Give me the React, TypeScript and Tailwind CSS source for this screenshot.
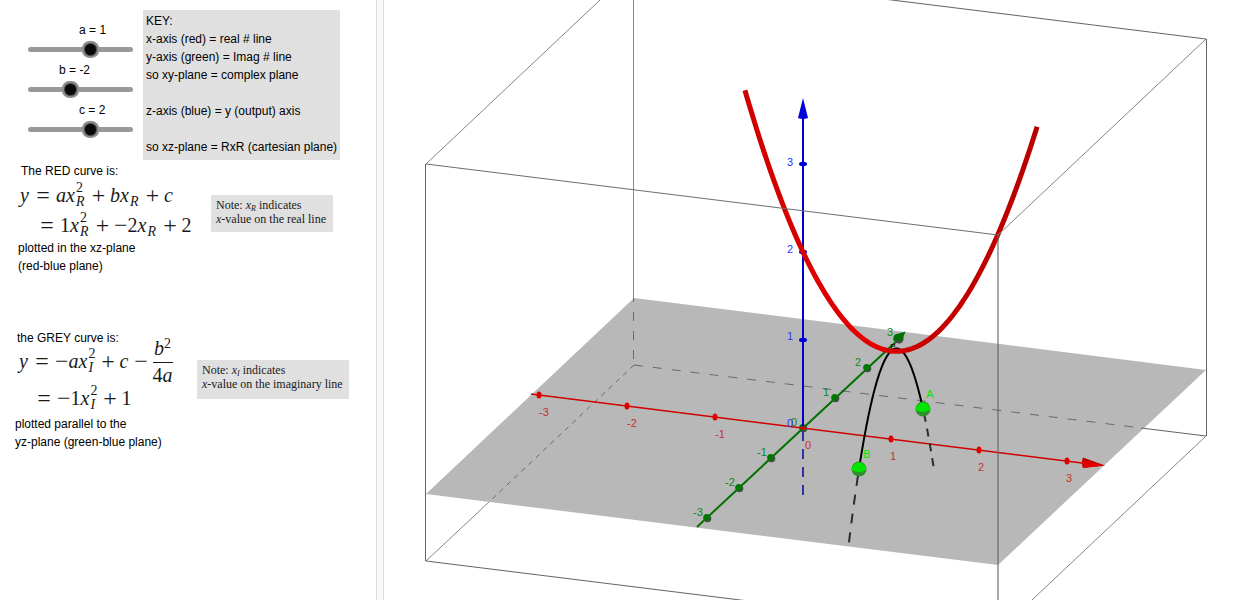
import { useState } from 'react';
import type { ReactNode } from 'react';

type Point = [number, number];

// Orthographic projection of the 3D view: origin and unit vectors in view units.
function project(x: number, y: number, z: number): Point {
  return [803 + 88 * x + 32 * y, 428 + 11 * x - 30 * y - 88 * z];
}

function toPath(from: number, to: number, at: (t: number) => Point) {
  const steps = 80;
  const points: string[] = [];
  for (let i = 0; i <= steps; i++) {
    const [px, py] = at(from + ((to - from) * i) / steps);
    points.push(`${px.toFixed(2)} ${py.toFixed(2)}`);
  }
  return `M${points.join('L')}`;
}

type SliderProps = {
  name: string;
  value: number;
  limit: number;
  onChange: (value: number) => void;
};

function Slider({ name, value, limit, onChange }: SliderProps) {
  const travel = ((value + limit) / (2 * limit)) * 100;
  return (
    <div className="flex h-10 flex-col">
      <label htmlFor={`slider-${name}`} className="h-5 leading-5 whitespace-nowrap" style={{ paddingLeft: travel + 19 }}>
        {name} = {value}
      </label>
      <input
        id={`slider-${name}`}
        type="range"
        min={-limit}
        max={limit}
        value={value}
        onChange={(e) => onChange(Number(e.target.value))}
        className="ml-7 h-[18px] w-[105px] cursor-pointer appearance-none bg-transparent [&::-webkit-slider-runnable-track]:h-[5px] [&::-webkit-slider-runnable-track]:rounded-full [&::-webkit-slider-runnable-track]:bg-[#999999] [&::-webkit-slider-thumb]:size-[5px] [&::-webkit-slider-thumb]:appearance-none [&::-webkit-slider-thumb]:rounded-full [&::-webkit-slider-thumb]:bg-[#0a0a0a] [&::-webkit-slider-thumb]:shadow-[0_0_0_3px_#0a0a0a,0_0_0_4px_#4a4a4a,0_0_0_6px_#8f8f8f]"
      />
    </div>
  );
}

function Equation({ children, className }: { children: ReactNode; className: string }) {
  return (
    <div className={`flex items-center font-['Liberation_Serif',serif] text-[20px] leading-6 text-[#1a1a1a] ${className}`}>
      {children}
    </div>
  );
}

function Equals() {
  return <span className="w-[26px] text-center text-[24px]">=</span>;
}

function Operator({ children }: { children: string }) {
  return <span className="w-[23px] text-center text-[24px]">{children}</span>;
}

function Minus() {
  return <span className="text-[24px]">−</span>;
}

function Var({ children }: { children: string }) {
  return <i className="min-w-[10px]">{children}</i>;
}

function Scripts({ sup, sub }: { sup?: string; sub: string }) {
  return (
    <span
      className={`flex h-7 flex-col justify-between text-[14px] leading-[14px] ${sub === 'R' ? 'w-[11px]' : 'w-2'}`}
    >
      <span>{sup}</span>
      <i>{sub}</i>
    </span>
  );
}

function Note({ sub, line, className }: { sub: string; line: string; className: string }) {
  return (
    <aside
      className={`bg-[#e0e0e0] px-[5px] pt-[3px] font-['Liberation_Serif',serif] text-[12px] leading-[14px] whitespace-nowrap text-[#1a1a1a] ${className}`}
    >
      <p>
        Note: <i>x</i>
        <sub className="text-[8px]">
          <i>{sub}</i>
        </sub>{' '}
        indicates
      </p>
      <p>
        <i>x</i>-value on the {line} line
      </p>
    </aside>
  );
}

type Coefficients = { a: number; b: number; c: number };

function Graph({ a, b, c }: Coefficients) {
  const vertex = -b / (2 * a);
  const bottom = c - (b * b) / (4 * a);
  const root = Math.sqrt(Math.abs(bottom / a));
  const real = (x: number) => project(x, 0, a * x * x + b * x + c);
  const imaginary = (t: number) => project(vertex, t, bottom - a * t * t);
  const pointA = imaginary(root);
  const pointB = imaginary(-root);
  const ticks = [-3, -2, -1, 0, 1, 2, 3];

  return (
    <svg
      viewBox="384 0 866 600"
      className="block h-auto w-full font-['Liberation_Sans',sans-serif] text-[11px]"
      role="img"
      aria-label="3D graph of the real and imaginary parabolas"
    >
      <defs>
        <linearGradient id="tube" x1="0" x2="1">
          <stop offset="0" stopColor="#d00000" />
          <stop offset="0.45" stopColor="#e60000" />
          <stop offset="0.6" stopColor="#c80000" />
          <stop offset="1" stopColor="#b80000" />
        </linearGradient>
      </defs>

      <path d="M426 494 634 298 1206 370 998 565Z" fill="#b8b8b8" />

      {/* hidden edges of the box */}
      <g fill="none" stroke="#6a6a6a">
        <path d="M633.5 298V365" strokeDasharray="9 10" strokeDashoffset="5" />
        <path d="M634 365 1141 428" strokeDasharray="9 10" />
        <path d="M634 365 489 502" strokeDasharray="5 5" />
      </g>

      {/* visible edges */}
      <g fill="none" stroke="#636363">
        <path d="M425.5 164V561" />
        <path d="M426 561 998 632" />
        <path d="M426 561 489 502" stroke="#858585" />
        <path d="M426 164 634 -32" stroke="#858585" />
        <path d="M634 -32 1206 39" />
        <path d="M1206.5 39V436" />
        <path d="M1141 428 1206 436" />
        <path d="M1206 436 998 632" stroke="#858585" />
        <path d="M633.5 0V298" stroke="#8a8a8a" />
      </g>

      {/* green axis */}
      <path d="M697 527 900 338" stroke="#007000" strokeWidth="2" />
      {ticks.map((n) => {
        const [x, y] = project(0, n, 0);
        return (
          <g key={n}>
            <circle cx={x + 0.5} cy={y + 0.5} r="3.8" fill="#4a4a4a" />
            <circle cx={x - 0.3} cy={y - 0.5} r="3.5" fill="#007800" />
          </g>
        );
      })}
      <circle cx="899" cy="339" r="4.5" fill="#4c4c4c" />
      <path d="M905.5 331.5 902 340.5 893.5 341Q892.5 337 895 334.5Z" fill="#007000" />

      {/* blue axis */}
      <path d="M803 428V495" stroke="#3030a0" strokeWidth="2" strokeDasharray="10 8" strokeDashoffset="-3" />
      <path d="M803 428V115" stroke="#0000c8" strokeWidth="2" />
      <path d="M803 98 798 118Q803 120 808 118Z" fill="#0000dc" />
      {[1, 2, 3].map((n) => (
        <ellipse key={n} cx="803" cy={428 - 88 * n} rx="4" ry="2.2" fill="#0000d0" />
      ))}

      {/* red axis */}
      <path d="M531 394 1090 464" stroke="#d00000" strokeWidth="1.5" />
      <path d="M1105 465.5 1083 457.5Q1081 463 1083 468Z" fill="#b80000" />
      <path d="M1105 465.5 1082 460 1083 468Z" fill="#e00000" />
      {ticks.map((n) => {
        const [x, y] = project(n, 0, 0);
        return <ellipse key={n} cx={x} cy={y} rx={n === 0 ? 2 : 2.5} ry={n === 0 ? 2 : 3.5} fill="#dc0000" />;
      })}

      {/* grey curve with its end points */}
      <path d={toPath(-root, root, imaginary)} fill="none" stroke="#000000" strokeWidth="2" />
      <path
        d={toPath(root, root + 0.33, imaginary)}
        fill="none"
        stroke="#2c2c2c"
        strokeWidth="2"
        strokeDasharray="8 7"
        strokeDashoffset="-5"
      />
      <path
        d={toPath(-root, -root - 0.32, imaginary)}
        fill="none"
        stroke="#2c2c2c"
        strokeWidth="2"
        strokeDasharray="10 9"
        strokeDashoffset="-7"
      />
      {[pointA, pointB].map(([x, y]) => (
        <g key={x}>
          <circle cx={x} cy={y} r="7.5" fill="#2f8f2f" />
          <path d={`M${x - 7.5} ${y + 1}a7.5 7.5 0 1 1 15 0q-7.5 4 -15 0z`} fill="#00e600" />
        </g>
      ))}

      {/* red curve */}
      <path d={toPath(-0.66, 2.66, real)} fill="none" stroke="url(#tube)" strokeWidth="5" />

      {/* front edges of the box */}
      <g fill="none" stroke="#6e6e6e">
        <path d="M426 164 998 235" />
        <path d="M998 235 1206 39" stroke="#858585" />
        <path d="M998 235V600" stroke="#606060" strokeOpacity="0.55" strokeWidth="2" />
      </g>

      <g textAnchor="middle">
        {ticks.map((n) => {
          const [x, y] = project(n, 0, 0);
          return (
            <text key={n} x={x + (n <= 0 ? 5 : 2)} y={y + 21} fill="#c43030">
              {n}
            </text>
          );
        })}
        {ticks.map((n) => {
          const [x, y] = project(0, n, 0);
          return (
            <text key={n} x={x - 9} y={y - 2} fill="#108a10">
              {n}
            </text>
          );
        })}
        {[0, 1, 2, 3].map((n) => (
          <text key={n} x="790" y={427 - 87 * n} fill="#3030ff">
            {n}
          </text>
        ))}
        <text x="893" y="349" fill="#000000" fontSize="8">
          P
        </text>
        <g fill="#00e600">
          <text x={pointA[0] + 7} y={pointA[1] - 11}>
            A
          </text>
          <text x={pointB[0] + 8} y={pointB[1] - 11}>
            B
          </text>
        </g>
      </g>
    </svg>
  );
}

function App() {
  const [a, setA] = useState(1);
  const [b, setB] = useState(-2);
  const [c, setC] = useState(2);

  return (
    <main className="flex items-stretch bg-white font-['Liberation_Sans',sans-serif] text-[12px] leading-[18px] text-black">
      <div className="w-[376px] shrink-0 pt-[10px]">
        <div className="flex">
          <div className="w-[143px] shrink-0 pt-[10px]">
            <Slider name="a" value={a} limit={5} onChange={setA} />
            <Slider name="b" value={b} limit={10} onChange={setB} />
            <Slider name="c" value={c} limit={10} onChange={setC} />
          </div>
          <div className="bg-[#e0e0e0] px-[3px] pt-[2px] pb-1 whitespace-nowrap">
            <p>KEY:</p>
            <p>x-axis (red) = real # line</p>
            <p>y-axis (green) = Imag # line</p>
            <p>so xy-plane = complex plane</p>
            <p className="mt-[18px]">z-axis (blue) = y (output) axis</p>
            <p className="mt-[18px]">so xz-plane = RxR (cartesian plane)</p>
          </div>
        </div>

        <section className="mt-0.5 flex items-start">
          <div className="w-[211px] shrink-0 pl-[18px]">
            <p className="pl-[3px]">The RED curve is:</p>
            <Equation className="h-[30px] pl-0.5">
              <Var>y</Var>
              <Equals />
              <Var>a</Var>
              <Var>x</Var>
              <Scripts sup="2" sub="R" />
              <Operator>+</Operator>
              <Var>b</Var>
              <Var>x</Var>
              <Scripts sub="R" />
              <Operator>+</Operator>
              <Var>c</Var>
            </Equation>
            <Equation className="h-[29px] pl-4">
              <Equals />
              {a}
              <Var>x</Var>
              <Scripts sup="2" sub="R" />
              <Operator>+</Operator>
              {b < 0 && <Minus />}
              {Math.abs(b)}
              <Var>x</Var>
              <Scripts sub="R" />
              <Operator>+</Operator>
              {c}
            </Equation>
            <p>plotted in the xz-plane</p>
            <p>(red-blue plane)</p>
          </div>
          <Note sub="R" line="real" className="mt-[33px] h-[37px] w-[122px]" />
        </section>

        <section className="mt-[54px] flex items-start">
          <div className="w-[197px] shrink-0 pl-[15px]">
            <p className="pl-0.5">the GREY curve is:</p>
            <Equation className="h-7 pl-1">
              <Var>y</Var>
              <Equals />
              <Minus />
              <Var>a</Var>
              <Var>x</Var>
              <Scripts sup="2" sub="I" />
              <Operator>+</Operator>
              <Var>c</Var>
              <Operator>−</Operator>
              <span className="flex flex-col items-center">
                <span className="flex pb-0.5">
                  <i>b</i>
                  <span className="text-[14px] leading-4">2</span>
                </span>
                <span className="border-t border-[#1a1a1a]">
                  4<i>a</i>
                </span>
              </span>
            </Equation>
            <Equation className="mt-2 h-[30px] pl-4">
              <Equals />
              <Minus />
              {a}
              <Var>x</Var>
              <Scripts sup="2" sub="I" />
              <Operator>+</Operator>
              {c - (b * b) / (4 * a)}
            </Equation>
            <p className="mt-0.5">plotted parallel to the</p>
            <p>yz-plane (green-blue plane)</p>
          </div>
          <Note sub="I" line="imaginary" className="mt-[31px] h-[39px] w-[152px]" />
        </section>
      </div>

      <div className="w-2 shrink-0 border-x border-[#dcdcdc] bg-[#f8f8f8]" />

      <div className="min-w-0 flex-1">
        <Graph a={a} b={b} c={c} />
      </div>
    </main>
  );
}

export default App;
